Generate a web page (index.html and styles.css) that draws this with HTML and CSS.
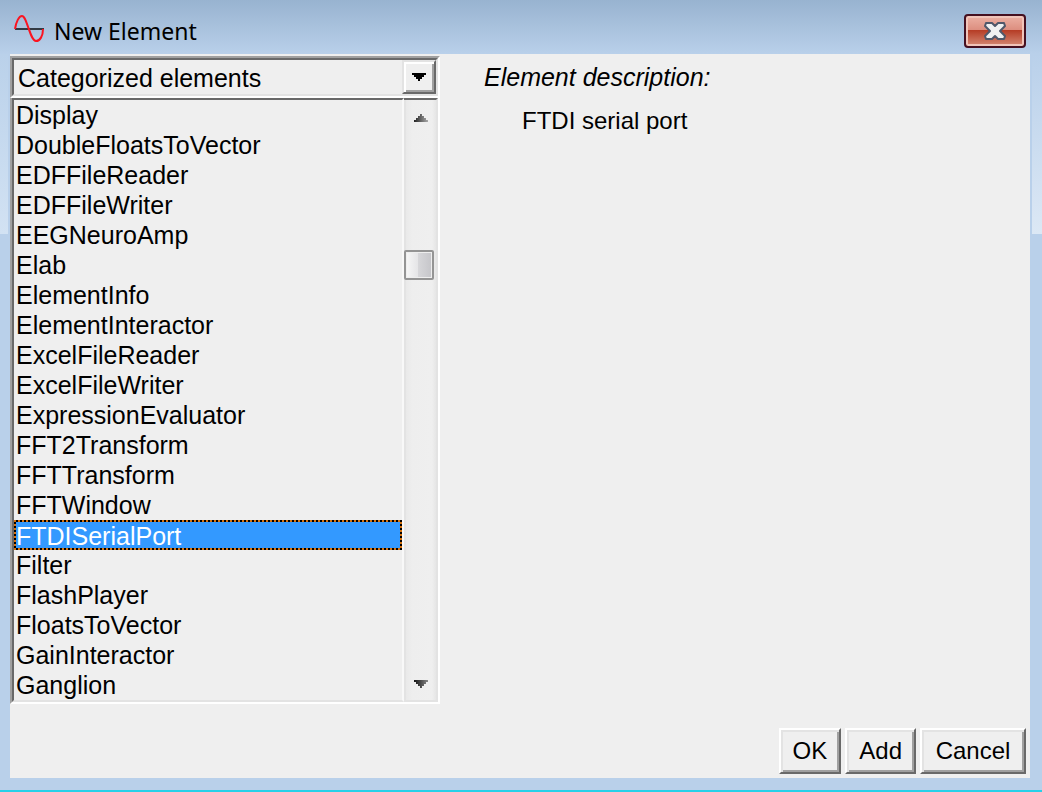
FILE: index.html
```
<!DOCTYPE html>
<html lang="en">
<head>
<meta charset="utf-8">
<title>New Element</title>
<link rel="stylesheet" href="styles.css">
</head>
<body>
<div class="window">
  <header class="titlebar">
    <svg class="logo" width="32" height="32" viewBox="0 0 32 32" aria-hidden="true">
      <path d="M1 14H30" stroke="#333b45" stroke-width="2"/>
      <path d="M1 14C2 7 5 1 8 1C13 1 16 26 22 26C26 26 29 21 29 14" fill="none" stroke="#fb1420" stroke-width="2"/>
    </svg>
    <h1 class="title">New Element</h1>
    <button class="close" type="button" aria-label="Close">
      <svg width="24" height="20" viewBox="0 0 24 20" aria-hidden="true">
        <path d="M3 2H9L12 5L15 2H21L22 5L17 10L22 15L21 18H15L12 15L9 18H3L2 15L7 10L2 5Z" fill="#f0f0f0" stroke="#50586a" stroke-width="2" stroke-linejoin="round"/>
      </svg>
    </button>
  </header>
  <main class="content">
    <div class="panes">
      <section class="chooser">
        <div class="combo">
          <select class="category" aria-label="Category">
            <option>Categorized elements</option>
          </select>
          <span class="drop" aria-hidden="true">
            <svg width="14" height="8" viewBox="0 0 14 8" shape-rendering="crispEdges"><path d="M0 0H14V2H12V4H10V6H8V8H6V6H4V4H2V2H0Z" fill="#000"/></svg>
          </span>
        </div>
        <div class="listbox">
          <select class="elements" size="20" aria-label="Elements">
            <option>Display</option>
            <option>DoubleFloatsToVector</option>
            <option>EDFFileReader</option>
            <option>EDFFileWriter</option>
            <option>EEGNeuroAmp</option>
            <option>Elab</option>
            <option>ElementInfo</option>
            <option>ElementInteractor</option>
            <option>ExcelFileReader</option>
            <option>ExcelFileWriter</option>
            <option>ExpressionEvaluator</option>
            <option>FFT2Transform</option>
            <option>FFTTransform</option>
            <option>FFTWindow</option>
            <option selected>FTDISerialPort</option>
            <option>Filter</option>
            <option>FlashPlayer</option>
            <option>FloatsToVector</option>
            <option>GainInteractor</option>
            <option>Ganglion</option>
          </select>
          <div class="scrollbar">
            <button class="step step-up" type="button" aria-label="Scroll up">
              <svg width="14" height="8" viewBox="0 0 14 8" shape-rendering="crispEdges"><defs><linearGradient id="up"><stop stop-color="#222"/><stop offset="1" stop-color="#aaa"/></linearGradient></defs><path d="M6 0H8V2H10V4H12V6H14V8H0V6H2V4H4V2H6Z" fill="url(#up)"/></svg>
            </button>
            <span class="thumb"></span>
            <button class="step step-down" type="button" aria-label="Scroll down">
              <svg width="14" height="8" viewBox="0 0 14 8" shape-rendering="crispEdges"><defs><linearGradient id="down"><stop stop-color="#111"/><stop offset="1" stop-color="#888"/></linearGradient></defs><path d="M0 0H14V2H12V4H10V6H8V8H6V6H4V4H2V2H0Z" fill="url(#down)"/></svg>
            </button>
          </div>
        </div>
      </section>
      <section class="description">
        <h2 class="heading">Element description:</h2>
        <p class="detail">FTDI serial port</p>
      </section>
    </div>
    <footer class="actions">
      <button class="action" type="button">OK</button>
      <button class="action" type="button">Add</button>
      <button class="action action-wide" type="button">Cancel</button>
    </footer>
  </main>
</div>
</body>
</html>
```
FILE: styles.css
```
* { box-sizing: border-box; }
body {
  margin: 0;
  font: 24px/30px "Liberation Sans", Arial, sans-serif;
  color: #000;
}
button, select {
  font: inherit;
  color: inherit;
  margin: 0;
  padding: 0;
  border: 0;
  border-radius: 0;
  background: none;
  appearance: none;
  outline: 0;
}
.window {
  display: flex;
  flex-direction: column;
  min-height: 100vh;
  padding: 0 12px 12px 10px;
  border-bottom: 2px solid #28d0e8;
  background:
    linear-gradient(#b9d0ea, #dce8f5) right 54px / 10px 180px no-repeat,
    linear-gradient(#bad1ea, #d2e2f3) left 54px / 8px 180px no-repeat,
    linear-gradient(#98b3d0, #b9d0ea 54px, #b9d0ea);
}
.titlebar {
  display: flex;
  align-items: center;
  height: 54px;
  padding: 8px 4px 0;
}
.logo { margin-right: 8px; }
.title {
  flex: 1;
  margin: 0;
  font: 23px/30px "Noto Sans", "Open Sans", sans-serif;
}
.close {
  display: flex;
  align-items: center;
  justify-content: center;
  width: 62px;
  height: 34px;
  border: 2px solid #451020;
  border-radius: 4px;
  background: linear-gradient(#ecb0a3, #dc8d7e 48%, #b63d26 48%, #d58a75);
  box-shadow: inset 0 0 0 2px #f1c4b9;
}
.content {
  flex: 1;
  display: flex;
  flex-direction: column;
  padding-top: 2px;
  background: #efefef;
}
.panes {
  flex: 1;
  display: grid;
  grid-template-columns: 430px 1fr;
}
.combo, .listbox {
  display: flex;
  border: 2px solid;
  border-color: #a0a0a0 #fff #fff #a0a0a0;
}
.combo {
  position: relative;
  height: 42px;
}
.category {
  flex: 1;
  padding: 2px 0 0 4px;
  font-size: 25px;
  border: 2px solid;
  border-color: #696969 #e3e3e3 #e3e3e3 #696969;
}
.drop {
  position: absolute;
  top: 2px;
  right: 2px;
  display: flex;
  align-items: center;
  justify-content: center;
  width: 34px;
  height: 34px;
  border: 2px solid;
  border-color: #e3e3e3 #696969 #696969 #e3e3e3;
  box-shadow: inset 2px 2px #fff, inset -2px -2px #a0a0a0;
  pointer-events: none;
}
.listbox { border-top: 0; }
.elements {
  flex: 1;
  height: 604px;
  overflow: hidden;
  scrollbar-width: none;
  font-size: 25px;
  border: 2px solid;
  border-color: #696969 #f8f8f8 #e3e3e3 #696969;
}
.elements option {
  height: 30px;
  min-height: 30px;
  padding: 1px 2px 0;
}
.elements option:checked {
  padding: 0;
  border: 2px solid transparent;
  color: #fff;
  background:
    linear-gradient(#3399ff, #3399ff) padding-box,
    repeating-conic-gradient(#000 0 25%, #d87410 0 50%) 0 0 / 4px 4px border-box;
}
.scrollbar {
  display: flex;
  flex-direction: column;
  align-items: flex-start;
  width: 34px;
  border-top: 2px solid #696969;
  border-right: 2px solid #e3e3e3;
  border-bottom: 2px solid #e3e3e3;
  background: linear-gradient(90deg, #e3e3e3 2px, #e9e9e9 2px, #eee 8px, #efefef 28px, #e6e6e6);
}
.step {
  display: flex;
  justify-content: center;
  width: 100%;
  height: 34px;
  padding-left: 2px;
}
.step-up { padding-top: 14px; }
.step-down { align-items: flex-end; padding-bottom: 12px; margin-top: auto; }
.thumb {
  width: 30px;
  height: 30px;
  margin-top: 116px;
  border: 2px solid #949494;
  border-radius: 2px;
  background: linear-gradient(90deg, #f7f7f7, #e5e5e7 45%, #d7d7da 45%, #c5c5c9);
  box-shadow: inset 0 0 0 1px #eee;
}
.description { padding: 6px 12px 0 44px; }
.heading {
  margin: 0 0 14px;
  font-size: 25px;
  font-weight: 400;
  font-style: italic;
}
.detail { margin: 0 0 0 38px; }
.actions {
  display: flex;
  justify-content: flex-end;
  gap: 4px;
  padding: 0 4px 4px;
}
.action {
  height: 46px;
  padding: 0 12px;
  border: 2px solid;
  border-color: #fff #696969 #696969 #fff;
  box-shadow: inset 2px 2px #e3e3e3, inset -2px -2px #a0a0a0;
}
.action-wide { min-width: 106px; }
```
